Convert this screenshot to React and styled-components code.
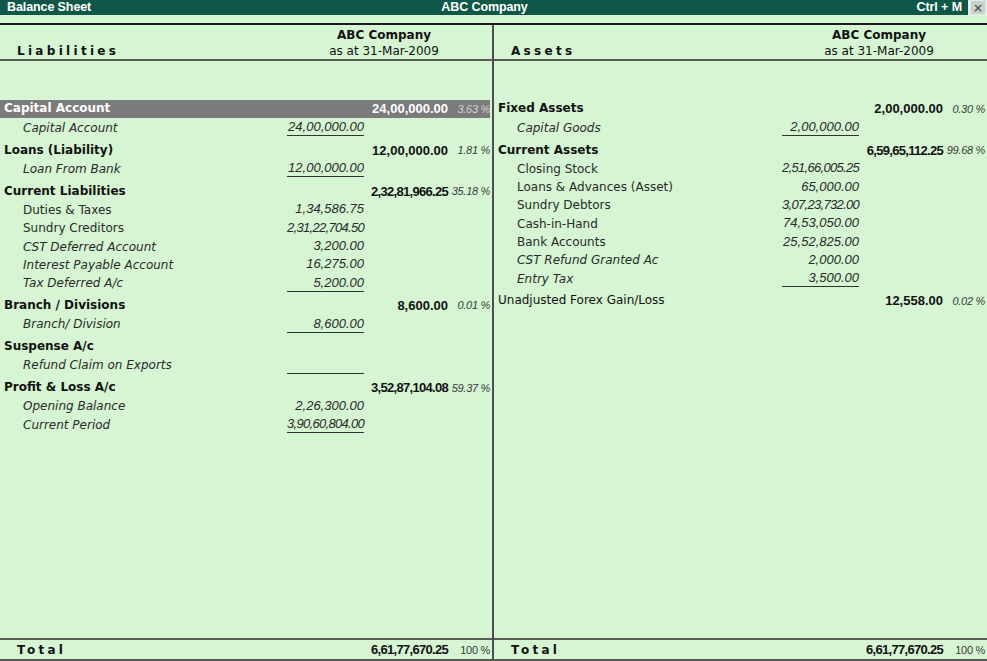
import React from "react";
import styled, { createGlobalStyle, css } from "styled-components";

const GlobalStyle = createGlobalStyle`
  html, body {
    margin: 0;
    padding: 0;
    background: #d5f5d3;
  }
  * {
    box-sizing: border-box;
  }
`;

const Screen = styled.div`
  width: 987px;
  height: 661px;
  display: flex;
  flex-direction: column;
  background: #d5f5d3;
  color: #111;
  font-family: "DejaVu Sans", "Liberation Sans", sans-serif;
  overflow: hidden;
`;

const TitleBar = styled.div`
  height: 15px;
  display: flex;
  align-items: stretch;
  background: #e4ece6;
`;

const TitleMain = styled.div`
  flex: 1;
  display: grid;
  grid-template-columns: 1fr auto 1fr;
  align-items: center;
  padding: 0 6px 0 7px;
  background: #0f5747;
  color: #fff;
  font-family: "Liberation Sans", Arial, sans-serif;
  font-weight: bold;
  font-size: 12.5px;
  letter-spacing: -0.1px;
  line-height: 15px;
`;

const TitleRight = styled.span`
  justify-self: end;
`;

const CloseBox = styled.div`
  width: 14px;
  margin: 1px 2px 1px 3px;
  display: flex;
  align-items: center;
  justify-content: center;
  background: #c9d1cd;
  color: #5a5a5a;
  font-family: "DejaVu Sans", sans-serif;
  font-size: 12px;
  font-weight: bold;
  line-height: 1;
`;

const Frame = styled.div`
  flex: 1;
  margin-top: 8px;
  border-top: 2px solid #1c1c1c;
  display: grid;
  grid-template-columns: 494px 1fr;
  min-height: 0;
`;

const Column = styled.div`
  display: flex;
  flex-direction: column;
  min-height: 0;
  ${({ $divider }) =>
    $divider &&
    css`
      border-right: 2px solid #4e4e4e;
    `}
`;

const ColHeader = styled.div`
  height: 36px;
  display: flex;
  justify-content: space-between;
  align-items: flex-end;
  padding: 0 28px 0 17px;
  border-bottom: 2px solid #5a5a5a;
`;

const SpacedLabel = styled.div`
  font-weight: bold;
  font-size: 12px;
  letter-spacing: 3.3px;
  line-height: 16px;
`;

const CompanyBlock = styled.div`
  width: 160px;
  text-align: center;
  font-size: 12px;
  line-height: 16px;
`;

const CompanyName = styled.div`
  font-weight: bold;
`;

const ColBody = styled.div`
  flex: 1;
  padding-top: 37.8px;
`;

const Row = styled.div`
  display: grid;
  grid-template-columns: 1fr 110px 84px 42px;
  align-items: center;
  height: ${({ $group, $ruled }) => ($group ? 20.3 : 18.3) + ($ruled ? 2.5 : 0)}px;
  padding-right: 2px;
  padding-bottom: ${({ $ruled }) => ($ruled ? "2.5px" : "0")};
  ${({ $active }) =>
    $active &&
    css`
      margin-top: -1px;
      padding-top: 2px;
      padding-bottom: 1px;
      height: 21.3px;
      background: #7b7b7b;
      background-clip: content-box;
      color: #fff;
    `}
`;

const Label = styled.div`
  padding-left: ${({ $sub }) => ($sub ? "23px" : "4px")};
  font-size: 12px;
  font-weight: ${({ $bold }) => ($bold ? "bold" : "normal")};
  font-style: ${({ $italic }) => ($italic ? "italic" : "normal")};
  color: ${({ $sub }) => ($sub ? "#2a2a2a" : "inherit")};
  white-space: nowrap;
  line-height: 15px;
`;

const AmountCell = styled.div`
  text-align: right;
  font-family: "Liberation Sans", Arial, sans-serif;
  font-size: 13px;
  line-height: 13px;
  white-space: nowrap;
  letter-spacing: ${({ $tight }) => ($tight ? "-0.7px" : "0")};
`;

const SubAmount = styled.span`
  display: inline-block;
  min-width: 77px;
  font-style: italic;
  color: #2a2a2a;
  padding-bottom: 2px;
  border-bottom: ${({ $ruled }) => ($ruled ? "1px solid #333" : "1px solid transparent")};
`;

const GroupAmount = styled.span`
  font-weight: bold;
`;

const Percent = styled.div`
  text-align: right;
  font-family: "Liberation Sans", Arial, sans-serif;
  font-size: 11px;
  letter-spacing: -0.3px;
  font-style: ${({ $plain }) => ($plain ? "normal" : "italic")};
  color: ${({ $active }) => ($active ? "#d4d4d4" : "#3a3a3a")};
  white-space: nowrap;
`;

const ColFooter = styled.div`
  height: 23px;
  display: grid;
  grid-template-columns: 1fr 110px 84px 42px;
  align-items: center;
  padding-right: 2px;
  border-top: 2px solid #5a5a5a;
  border-bottom: 2px solid #5a5a5a;
`;

const FooterLabel = styled(SpacedLabel)`
  padding-left: 17px;
`;

const liabilities = [
  { name: "Capital Account", amount: "24,00,000.00", pct: "3.63 %", active: true },
  { name: "Capital Account", sub: "24,00,000.00", italic: true, ruled: true },
  { name: "Loans (Liability)", amount: "12,00,000.00", pct: "1.81 %" },
  { name: "Loan From Bank", sub: "12,00,000.00", italic: true, ruled: true },
  { name: "Current Liabilities", amount: "2,32,81,966.25", pct: "35.18 %" },
  { name: "Duties & Taxes", sub: "1,34,586.75" },
  { name: "Sundry Creditors", sub: "2,31,22,704.50" },
  { name: "CST Deferred Account", sub: "3,200.00", italic: true },
  { name: "Interest Payable Account", sub: "16,275.00", italic: true },
  { name: "Tax Deferred A/c", sub: "5,200.00", italic: true, ruled: true },
  { name: "Branch / Divisions", amount: "8,600.00", pct: "0.01 %" },
  { name: "Branch/ Division", sub: "8,600.00", italic: true, ruled: true },
  { name: "Suspense A/c", amount: "" },
  { name: "Refund Claim on Exports", sub: "", italic: true, ruled: true },
  { name: "Profit & Loss A/c", amount: "3,52,87,104.08", pct: "59.37 %" },
  { name: "Opening Balance", sub: "2,26,300.00", italic: true },
  { name: "Current Period", sub: "3,90,60,804.00", italic: true, ruled: true },
];

const assets = [
  { name: "Fixed Assets", amount: "2,00,000.00", pct: "0.30 %" },
  { name: "Capital Goods", sub: "2,00,000.00", italic: true, ruled: true },
  { name: "Current Assets", amount: "6,59,65,112.25", pct: "99.68 %" },
  { name: "Closing Stock", sub: "2,51,66,005.25" },
  { name: "Loans & Advances (Asset)", sub: "65,000.00" },
  { name: "Sundry Debtors", sub: "3,07,23,732.00" },
  { name: "Cash-in-Hand", sub: "74,53,050.00" },
  { name: "Bank Accounts", sub: "25,52,825.00" },
  { name: "CST Refund Granted Ac", sub: "2,000.00", italic: true },
  { name: "Entry Tax", sub: "3,500.00", italic: true, ruled: true },
  { name: "Unadjusted Forex Gain/Loss", amount: "12,558.00", pct: "0.02 %", light: true },
];

function LedgerRow({ row }) {
  const isGroup = row.sub === undefined;
  const value = isGroup ? row.amount : row.sub;
  const tight = value.length > 12;
  return (
    <Row $group={isGroup} $ruled={row.ruled} $active={row.active}>
      <Label $sub={!isGroup} $bold={isGroup && !row.light} $italic={row.italic}>
        {row.name}
      </Label>
      <AmountCell $tight={tight}>
        {!isGroup && <SubAmount $ruled={row.ruled}>{value || "\u00a0"}</SubAmount>}
      </AmountCell>
      <AmountCell $tight={tight}>{isGroup && <GroupAmount>{value}</GroupAmount>}</AmountCell>
      <Percent $active={row.active}>{isGroup ? row.pct : ""}</Percent>
    </Row>
  );
}

function SideColumn({ title, rows, divider }) {
  return (
    <Column $divider={divider}>
      <ColHeader>
        <SpacedLabel>{title}</SpacedLabel>
        <CompanyBlock>
          <CompanyName>ABC Company</CompanyName>
          <div>as at 31-Mar-2009</div>
        </CompanyBlock>
      </ColHeader>
      <ColBody>
        {rows.map((row, i) => (
          <LedgerRow key={i} row={row} />
        ))}
      </ColBody>
      <ColFooter>
        <FooterLabel>Total</FooterLabel>
        <div />
        <AmountCell $tight>
          <GroupAmount>6,61,77,670.25</GroupAmount>
        </AmountCell>
        <Percent $plain>100 %</Percent>
      </ColFooter>
    </Column>
  );
}

export default function App() {
  return (
    <Screen>
      <GlobalStyle />
      <TitleBar>
        <TitleMain>
          <span>Balance Sheet</span>
          <span>ABC Company</span>
          <TitleRight>Ctrl + M</TitleRight>
        </TitleMain>
        <CloseBox>×</CloseBox>
      </TitleBar>
      <Frame>
        <SideColumn title="Liabilities" rows={liabilities} divider />
        <SideColumn title="Assets" rows={assets} />
      </Frame>
    </Screen>
  );
}
